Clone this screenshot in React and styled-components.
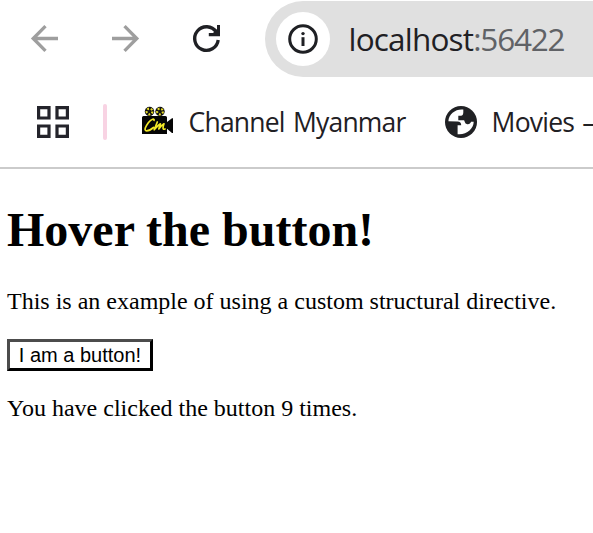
import React, { useState } from "react";
import styled, { createGlobalStyle } from "styled-components";

const GlobalStyle = createGlobalStyle`
  body { margin: 0; background: #fff; overflow: hidden; }
`;

const Window = styled.div`
  width: 593px;
  height: 533px;
  overflow: hidden;
  background: #fff;
`;

const Toolbar = styled.header`
  display: flex;
  height: 77px;
  box-sizing: border-box;
  padding: 1px 0 0 31px;
`;

const NavButtons = styled.nav`
  display: flex;
  align-items: center;
  gap: 54px;
  width: 234px;
  height: 75px;
  flex: none;
`;

const Icon = styled.svg`
  display: block;
  flex: none;
  overflow: visible;
`;

const AddressBar = styled.div`
  display: flex;
  align-items: center;
  box-sizing: border-box;
  flex: none;
  width: 328px;
  height: 76px;
  padding-left: 11px;
  border-radius: 38px 0 0 38px;
  background: #e0e0e0;
`;

const SiteInfo = styled.span`
  display: grid;
  place-items: center;
  width: 54px;
  height: 54px;
  border-radius: 50%;
  background: #fff;
`;

const Url = styled.span`
  margin-left: 18.5px;
  color: #1f2024;
  font: 31.5px/44px "Open Sans", sans-serif;
  letter-spacing: -0.8px;
  white-space: nowrap;
`;

const Port = styled.span`
  color: #606266;
  letter-spacing: -1.2px;
`;

const Bookmarks = styled.div`
  display: flex;
  align-items: center;
  box-sizing: border-box;
  height: 92px;
  padding-left: 37px;
  border-bottom: 2px solid #cbcbcb;
`;

const Divider = styled.span`
  flex: none;
  width: 4px;
  height: 36px;
  margin: 0 35px 0 34px;
  border-radius: 2px;
  background: #f8d3e3;
`;

const Bookmark = styled.span`
  display: flex;
  align-items: center;
  flex: none;
  gap: ${(p) => (p.$last ? 15 : 14.5)}px;
  margin-right: ${(p) => (p.$last ? 0 : 39)}px;
  color: #1f2024;
  font: 26.5px/38px "Open Sans", sans-serif;
  letter-spacing: -0.78px;
  word-spacing: 2px;
  white-space: nowrap;
`;

const Page = styled.main`
  padding: 33px 7px 0;
  color: #000;
  font-family: "Liberation Serif", serif;
`;

const Title = styled.h1`
  margin: 0;
  font-size: 48px;
  line-height: 55px;
  white-space: nowrap;
`;

const Paragraph = styled.p`
  margin: ${(p) => p.$top}px 0 0;
  font-size: 24px;
  line-height: 27px;
  white-space: nowrap;
`;

const Button = styled.button`
  display: block;
  box-sizing: border-box;
  width: 146px;
  height: 32px;
  margin: 24px 0 0;
  padding: 0;
  border: 3px solid;
  border-color: #4c4c4c #000 #000 #4c4c4c;
  background: #fff;
  color: #000;
  font: 20px/26px "Liberation Sans", sans-serif;
  white-space: nowrap;
`;

function ArrowIcon({ forward }) {
  return (
    <Icon width="27" height="27" viewBox="0 0 27 27" fill="none" stroke="#9e9e9e" strokeWidth="3.3">
      <path d={forward ? "M0 13.5H24.5M12.5 1.2L24.8 13.5L12.5 25.8" : "M27 13.5H2.5M14.5 1.2L2.2 13.5L14.5 25.8"} />
    </Icon>
  );
}

function ReloadIcon() {
  return (
    <Icon width="27" height="27" viewBox="0 0 27 27">
      <path d="M25.2 15A11.8 11.8 0 1 1 23.3 7" fill="none" stroke="#1f2024" strokeWidth="3.3" />
      <path d="M27 0V11.2H15.8V8H20L24 4V0Z" fill="#1f2024" />
    </Icon>
  );
}

function InfoIcon() {
  return (
    <Icon width="30" height="30" viewBox="0 0 30 30">
      <circle cx="15" cy="15" r="13.3" fill="none" stroke="#1f2024" strokeWidth="3" />
      <path d="M13.5 13.2h3v8.8h-3z" fill="#1f2024" />
      <circle cx="15" cy="9.6" r="1.7" fill="#1f2024" />
    </Icon>
  );
}

function AppsIcon() {
  return (
    <Icon width="32" height="32" viewBox="0 0 32 32" fill="none" stroke="#24242b" strokeWidth="3.2">
      <path d="M1.6 1.6h10.4v10.4H1.6zM20 1.6h10.4v10.4H20zM1.6 20h10.4v10.4H1.6zM20 20h10.4v10.4H20z" />
    </Icon>
  );
}

function CameraIcon() {
  return (
    <Icon width="32" height="32" viewBox="0 -1 32 32">
      <path d="M0 10.5Q0 9 1.5 9H23.5Q25 9 25 10.5V15L30 11.2H31V26H30L25 21.8V27H0Z" fill="#050505" />
      {[7.5, 18].map((x) => (
        <g key={x}>
          <circle cx={x} cy="4.5" r="4.7" fill="#111" />
          <circle cx={x} cy="4.5" r="2.9" fill="none" stroke="#e8df27" strokeWidth="2.1" strokeDasharray="1.9 1.74" />
        </g>
      ))}
      <path d="M12 13.3C12.8 11.5 9.5 11.7 6.5 15.5C3.5 19.5 1.6 23.7 4.6 23.8C7.2 23.8 9.4 22.3 11.5 20.5M15.3 15L12.2 22.8C14.5 20.2 16.5 17.8 18.4 16.8L16.8 21.9C18.5 19.5 20.3 17.8 22 16.8C20.7 20.3 20.4 23.1 23 22" fill="none" stroke="#f2e827" strokeWidth="1.7" strokeLinecap="round" strokeLinejoin="round" />
    </Icon>
  );
}

function GlobeIcon() {
  return (
    <Icon width="32" height="32" viewBox="0 0 32 32">
      <circle cx="16" cy="16" r="16" fill="#202124" />
      <path d="M18.3 3.6C11 2.7 3.8 7.8 3.4 15.3L12.5 15.6C15 15.7 16.3 17 16.2 19.3H12.6V28.2C21.5 29.2 28.6 22.7 28.7 15.8H26C25.5 17.8 23.8 18.7 21.7 18.1C19.8 17.5 19.8 15.2 19.1 14.2H13.3V9.7H16.2C18.2 9.6 18.1 7.6 18.3 6.5Z" fill="#fff" />
    </Icon>
  );
}

export default function App() {
  const [clicks, setClicks] = useState(9);

  return (
    <Window>
      <GlobalStyle />
      <Toolbar>
        <NavButtons>
          <ArrowIcon />
          <ArrowIcon forward />
          <ReloadIcon />
        </NavButtons>
        <AddressBar>
          <SiteInfo><InfoIcon /></SiteInfo>
          <Url>localhost<Port>:56422</Port></Url>
        </AddressBar>
      </Toolbar>
      <Bookmarks>
        <AppsIcon />
        <Divider />
        <Bookmark><CameraIcon />Channel Myanmar</Bookmark>
        <Bookmark $last><GlobeIcon />Movies –</Bookmark>
      </Bookmarks>
      <Page>
        <Title>Hover the button!</Title>
        <Paragraph $top={31}>This is an example of using a custom structural directive.</Paragraph>
        <Button onClick={() => setClicks(clicks + 1)}>I am a button!</Button>
        <Paragraph $top={24}>You have clicked the button {clicks} times.</Paragraph>
      </Page>
    </Window>
  );
}
